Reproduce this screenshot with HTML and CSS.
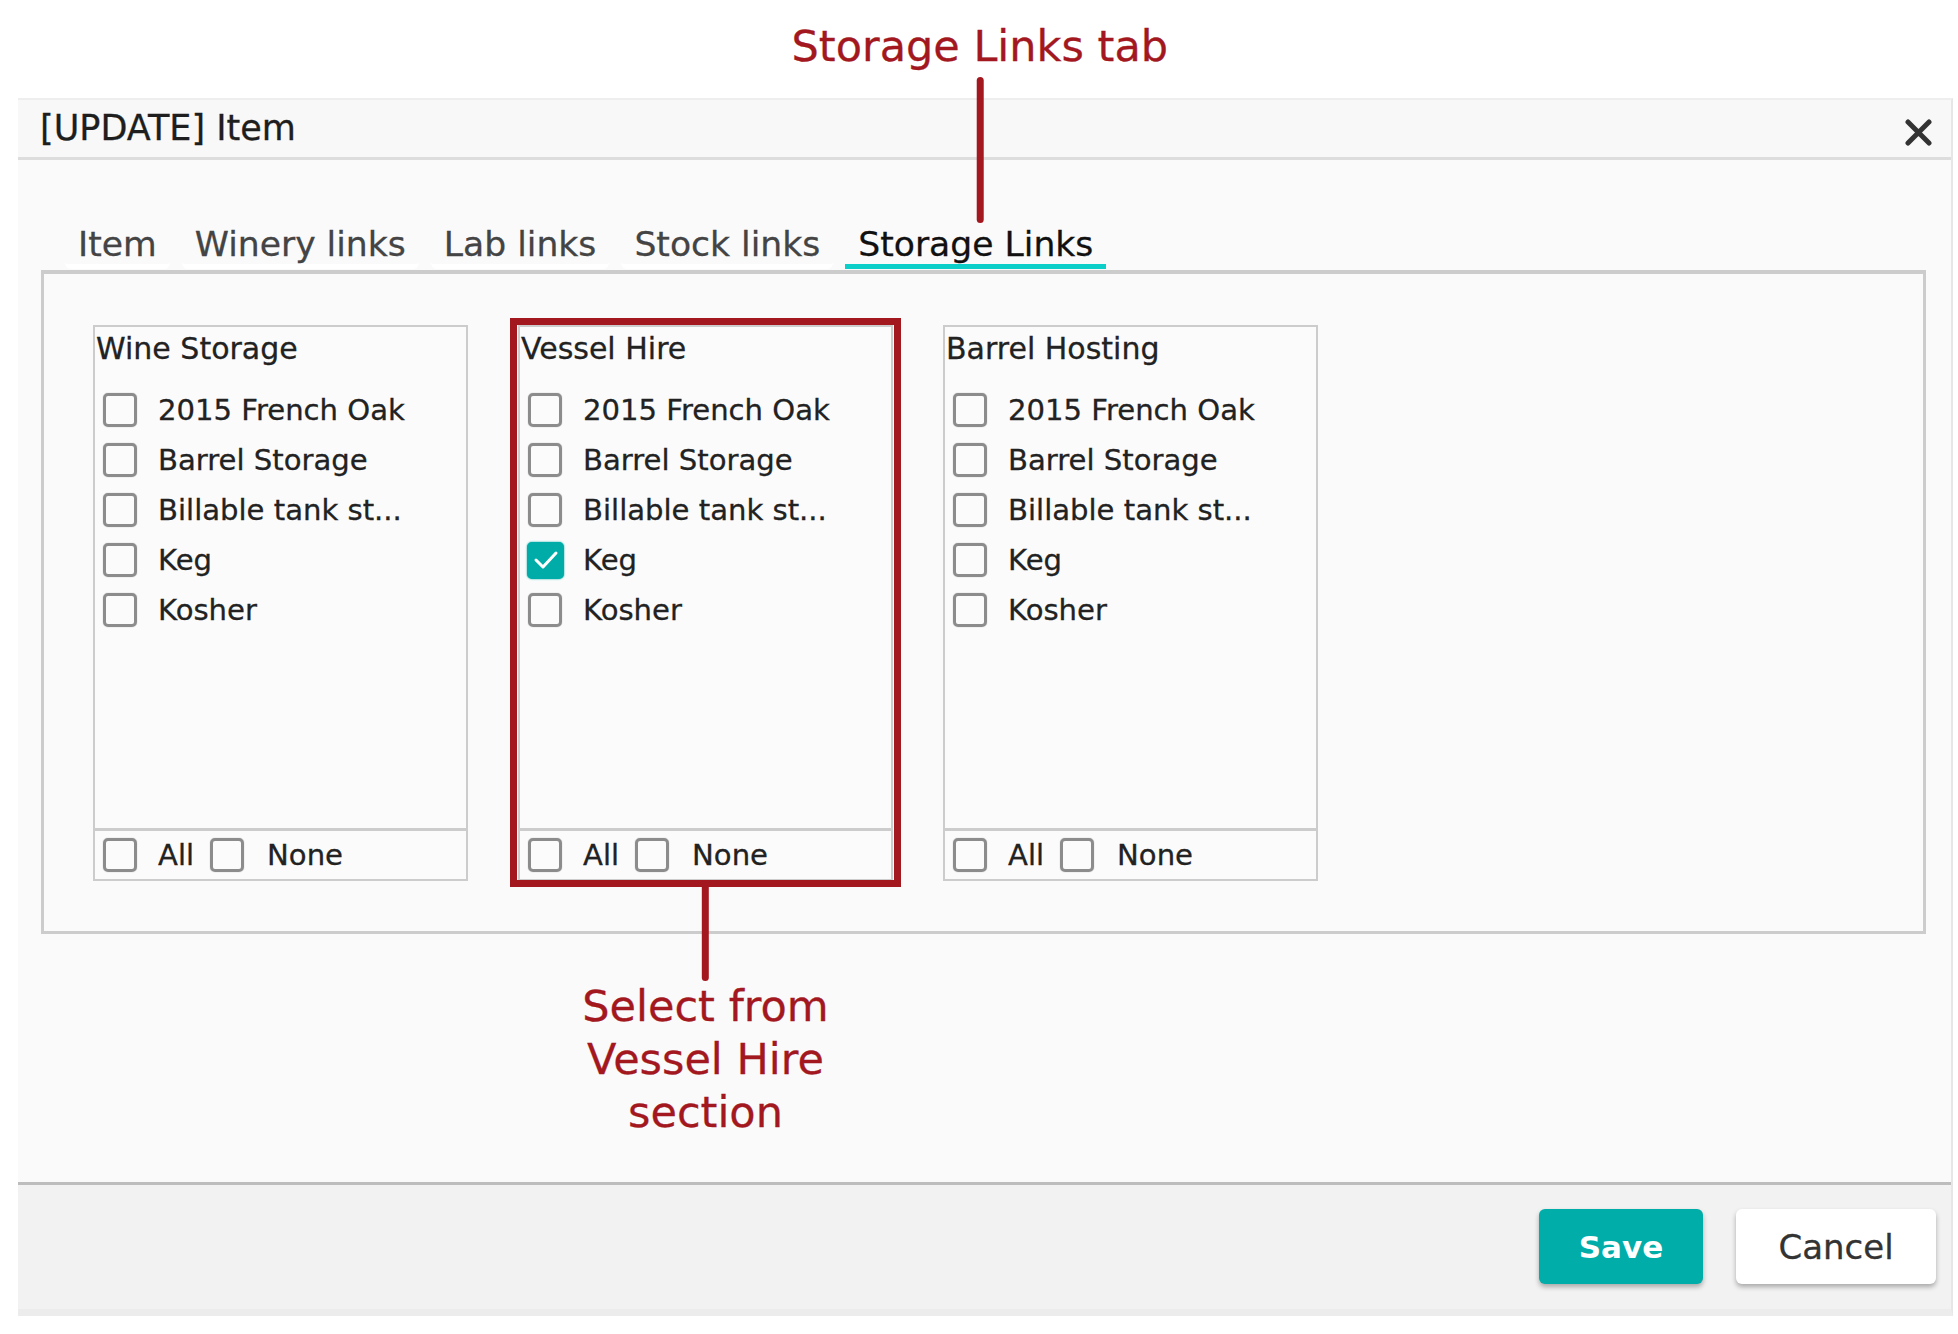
FILE: index.html
```html
<!DOCTYPE html>
<html lang="en">
<head>
  <meta charset="UTF-8">
  <meta name="viewport" content="width=device-width, initial-scale=1.0">
  <title>[UPDATE] Item</title>
  <link rel="stylesheet" href="styles.css">
</head>
<body>
  <div class="dialog">
    <div class="dialog-header">
      <h2>[UPDATE] Item</h2>
      <button class="close" aria-label="Close">
        <svg width="27" height="27" viewBox="0 0 27 27">
          <path d="M3 3 L24 24 M24 3 L3 24" stroke="#333" stroke-width="5" stroke-linecap="round"/>
        </svg>
      </button>
    </div>

    <div class="dialog-body">
      <ul class="tabs">
        <li class="tab">Item</li>
        <li class="tab">Winery links</li>
        <li class="tab">Lab links</li>
        <li class="tab">Stock links</li>
        <li class="tab active">Storage Links
          <div class="callout callout-up">
            <span class="callout-text">Storage Links tab</span>
            <i class="callout-line"></i>
          </div>
        </li>
      </ul>

      <div class="tab-panel">
        <div class="link-box">
          <div class="box-title">Wine Storage</div>
          <ul class="box-list">
            <li class="box-item"><span class="check"></span>2015 French Oak</li>
            <li class="box-item"><span class="check"></span>Barrel Storage</li>
            <li class="box-item"><span class="check"></span>Billable tank st...</li>
            <li class="box-item"><span class="check"></span>Keg</li>
            <li class="box-item"><span class="check"></span>Kosher</li>
          </ul>
          <div class="box-footer">
            <span class="opt"><span class="check"></span>All</span>
            <span class="opt opt-none"><span class="check"></span>None</span>
          </div>
        </div>

        <div class="link-box marked">
          <div class="box-title">Vessel Hire</div>
          <ul class="box-list">
            <li class="box-item"><span class="check"></span>2015 French Oak</li>
            <li class="box-item"><span class="check"></span>Barrel Storage</li>
            <li class="box-item"><span class="check"></span>Billable tank st...</li>
            <li class="box-item">
              <span class="check checked">
                <svg width="26" height="22" viewBox="0 0 26 22">
                  <path d="M3 11 L10 18 L23 4" fill="none" stroke="#fff" stroke-width="3" stroke-linecap="round" stroke-linejoin="round"/>
                </svg>
              </span>Keg
            </li>
            <li class="box-item"><span class="check"></span>Kosher</li>
          </ul>
          <div class="box-footer">
            <span class="opt"><span class="check"></span>All</span>
            <span class="opt opt-none"><span class="check"></span>None</span>
          </div>
          <div class="highlight"></div>
          <div class="callout callout-down">
            <i class="callout-line"></i>
            <span class="callout-text">Select from<br>Vessel Hire<br>section</span>
          </div>
        </div>

        <div class="link-box">
          <div class="box-title">Barrel Hosting</div>
          <ul class="box-list">
            <li class="box-item"><span class="check"></span>2015 French Oak</li>
            <li class="box-item"><span class="check"></span>Barrel Storage</li>
            <li class="box-item"><span class="check"></span>Billable tank st...</li>
            <li class="box-item"><span class="check"></span>Keg</li>
            <li class="box-item"><span class="check"></span>Kosher</li>
          </ul>
          <div class="box-footer">
            <span class="opt"><span class="check"></span>All</span>
            <span class="opt opt-none"><span class="check"></span>None</span>
          </div>
        </div>
      </div>
    </div>

    <div class="dialog-footer">
      <button class="btn btn-primary">Save</button>
      <button class="btn">Cancel</button>
    </div>
  </div>
</body>
</html>
```

FILE: styles.css
```css
* {
  box-sizing: border-box;
}
body {
  margin: 0;
  background: #fff;
  font-family: "DejaVu Sans", "Liberation Sans", sans-serif;
  color: #222;
  -webkit-text-stroke: 0.3px currentColor;
}

/* dialog frame */
.dialog {
  margin: 98px 0 0 18px;
  width: 1935px;
  background: #fafafa;
  border-top: 2px solid #eee;
  border-right: 2px solid #e6e6e6;
  border-bottom: 7px solid #ececec;
}
.dialog-header {
  display: flex;
  align-items: center;
  justify-content: space-between;
  height: 60px;
  padding: 0 19px 0 22px;
  background: #f8f8f8;
  border-bottom: 3px solid #ddd;
}
.dialog-header h2 {
  margin: 0;
  font-size: 35px;
  font-weight: normal;
  line-height: 57px;
  color: #1e1e1e;
}
.close {
  background: none;
  border: none;
  padding: 0;
  margin-top: 8px;
  width: 27px;
  height: 27px;
  cursor: pointer;
}
.close svg {
  display: block;
}

.dialog-body {
  height: 1022px;
  padding: 64px 25px 0 23px;
}

/* tabs */
.tabs {
  list-style: none;
  margin: 0 0 1px;
  padding: 0 0 0 24px;
  display: flex;
  gap: 12px;
}
.tab {
  position: relative;
  padding: 0 13px;
  font-size: 34.6px;
  line-height: 40px;
  color: #444;
  border-bottom: 5px solid #fff;
  border-radius: 0 0 6px 6px;
}
.tab.active {
  color: #111;
  border-bottom-color: #0ccfca;
  border-radius: 0;
}

.tab-panel {
  display: flex;
  gap: 50px;
  padding: 51px 49px 50px;
  border: 3px solid #ccc;
  border-top-width: 4px;
  background: #fafafa;
}

/* storage boxes */
.link-box {
  position: relative;
  width: 375px;
  border: 2px solid #ccc;
  background: #fbfbfb;
}
.box-title {
  height: 58px;
  padding: 0 0 14px 1px;
  font-size: 30px;
  line-height: 44px;
  color: #222;
}
.box-list {
  list-style: none;
  margin: 0;
  padding: 0 8px;
  height: 443px;
}
.box-item {
  display: flex;
  align-items: center;
  gap: 21px;
  height: 50px;
  font-size: 29.1px;
  line-height: 50px;
}
.box-footer {
  display: flex;
  align-items: center;
  height: 51px;
  padding: 0 8px;
  border-top: 3px solid #ccc;
  font-size: 29.1px;
}
.opt {
  display: flex;
  align-items: center;
  gap: 21px;
}
.opt-none {
  margin-left: 16px;
  gap: 23px;
}

.check {
  flex: none;
  display: inline-flex;
  align-items: center;
  justify-content: center;
  width: 34px;
  height: 34px;
  border: 3px solid #8c8c8c;
  border-radius: 5px;
  box-shadow: 0 0 1px #999;
}
.check.checked {
  width: 37px;
  height: 37px;
  margin-left: -1px;
  margin-right: -2px;
  background: #00aca8;
  border-color: #00aca8;
  box-shadow: 0 0 2px #00aca8;
}

/* annotations */
.highlight {
  position: absolute;
  top: -9px;
  left: -10px;
  right: -10px;
  bottom: -8px;
  border: 7px solid #a3181f;
  pointer-events: none;
}
.callout {
  position: absolute;
  left: 50%;
  transform: translateX(-50%);
  display: flex;
  flex-direction: column;
  align-items: center;
  color: #a3181f;
  z-index: 2;
}
.callout-text {
  font-size: 43px;
  white-space: nowrap;
  text-align: center;
}
.callout-line {
  display: block;
  width: 7px;
  background: #a3181f;
}
.callout-up {
  bottom: calc(100% + 1px);
  margin-left: 4px;
}
.callout-up .callout-text {
  line-height: 50px;
}
.callout-up .callout-line {
  height: 146px;
  margin-top: 6px;
  border-radius: 4px;
}
.callout-down {
  top: calc(100% + 8px);
}
.callout-down .callout-line {
  height: 94px;
  border-radius: 0 0 4px 4px;
}
.callout-down .callout-text {
  line-height: 53px;
  margin-top: -1px;
}

/* footer */
.dialog-footer {
  display: flex;
  justify-content: flex-end;
  align-items: flex-start;
  gap: 33px;
  height: 127px;
  padding: 24px 15px 0 0;
  background: #f2f2f2;
  border-top: 3px solid #bdbdbd;
}
.btn {
  height: 75px;
  width: 200px;
  border: none;
  border-radius: 6px;
  background: #fff;
  color: #333;
  font-family: inherit;
  font-size: 34px;
  box-shadow: 0 3px 5px rgba(0, 0, 0, 0.3);
  cursor: pointer;
}
.btn-primary {
  width: 164px;
  background: #00ada8;
  color: #fff;
  font-size: 31px;
  font-weight: bold;
  -webkit-text-stroke: 0;
}
```
